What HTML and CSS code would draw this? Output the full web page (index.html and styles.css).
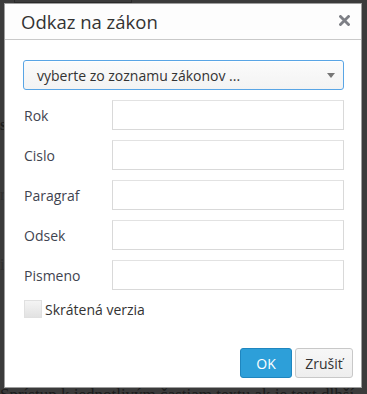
FILE: index.html
```html
<!DOCTYPE html>
<html lang="sk">
<head>
  <meta charset="UTF-8" />
  <title>Odkaz na zákon</title>
  <link rel="stylesheet" href="styles.css">
</head>
<body>
  <div class="page">
    <div class="page-bar"></div>
    <p class="page-line bold">s</p>
    <p class="page-line faint">r</p>
    <p class="page-line faint">i</p>
    <p class="page-line last">Sprístup k jednotlivým častiam textu ak je text dlhší</p>
  </div>

  <div class="dialog">
    <div class="dialog-head">
      <h1>Odkaz na zákon</h1>
      <button class="close-btn" title="Zavrieť">
        <svg width="11" height="11" viewBox="0 0 11 11">
          <path d="M1.5 1.5 L9.5 9.5 M9.5 1.5 L1.5 9.5" stroke="#7d7f85" stroke-width="2.8" stroke-linecap="square"/>
        </svg>
      </button>
    </div>

    <div class="dialog-body">
      <div class="select">
        <span>vyberte zo zoznamu zákonov ...</span>
        <span class="caret"></span>
      </div>

      <div class="row">
        <label>Rok</label>
        <input type="text">
      </div>
      <div class="row">
        <label>Cislo</label>
        <input type="text">
      </div>
      <div class="row">
        <label>Paragraf</label>
        <input type="text">
      </div>
      <div class="row">
        <label>Odsek</label>
        <input type="text">
      </div>
      <div class="row">
        <label>Pismeno</label>
        <input type="text">
      </div>

      <div class="check-row">
        <span class="checkbox"></span>
        <span>Skrátená verzia</span>
      </div>
    </div>

    <div class="dialog-foot">
      <button class="btn btn-primary">OK</button>
      <button class="btn">Zrušiť</button>
    </div>
  </div>
</body>
</html>
```

FILE: styles.css
```css
body {
  margin: 0;
  background: #3b3b3b;
  font-family: 'Open Sans', sans-serif;
  width: 367px;
  height: 394px;
  overflow: hidden;
  position: relative;
}
.page {
  font-family: 'Liberation Serif', serif;
  color: #1c1c1c;
}
.page-bar {
  height: 2px;
  margin-left: 14px;
  width: 116px;
  border: 1px solid #2a2a2a;
  border-top: none;
}
.page-line {
  margin: 0;
  font-size: 16px;
  line-height: 18px;
}
.page-line.bold {
  margin-top: 113px;
  font-weight: bold;
}
.page-line.faint {
  margin-top: 52px;
  color: #2e2e2e;
}
.page-line.last {
  margin-top: 112px;
  font-size: 17px;
}
.dialog {
  position: absolute;
  left: 4px;
  top: 3px;
  width: 358px;
  height: 385px;
  background: #fff;
  border: 1px solid #9e9e9e;
  box-sizing: border-box;
  display: flex;
  flex-direction: column;
}
.dialog-head {
  height: 36px;
  background: #fdfdfd;
  border-bottom: 1px solid #c9c9c9;
  display: flex;
  align-items: center;
  justify-content: space-between;
  padding: 0 11px 0 16px;
  box-sizing: border-box;
}
.dialog-head h1 {
  margin: 0;
  font-size: 18.5px;
  font-weight: normal;
  color: #333;
  line-height: 24px;
}
.close-btn {
  background: none;
  border: none;
  padding: 0;
  width: 12px;
  height: 12px;
  display: flex;
  align-items: center;
  justify-content: center;
  margin-top: -2px;
}
.dialog-body {
  padding: 20px 17px 0 18px;
  display: flex;
  flex-direction: column;
  gap: 10px;
}
.select {
  height: 30px;
  box-sizing: border-box;
  border: 1px solid #59a5e5;
  border-radius: 3px;
  background: linear-gradient(#fbfbfb, #f3f3f3);
  display: flex;
  align-items: center;
  justify-content: space-between;
  padding: 0 8px 0 13px;
  font-size: 14px;
  color: #333;
  box-shadow: inset 0 1px 0 #fff;
}
.caret {
  width: 0;
  height: 0;
  border-left: 4px solid transparent;
  border-right: 4px solid transparent;
  border-top: 5px solid #767676;
  margin-top: 1px;
}
.row {
  display: flex;
  align-items: center;
  height: 30px;
}
.row label {
  width: 88px;
  padding-left: 1px;
  font-size: 14px;
  color: #3f4450;
}
.row input {
  flex: 1;
  height: 30px;
  box-sizing: border-box;
  border: 1px solid #d9d9d9;
  border-top-color: #e2e2e2;
  background: #fff;
  margin: 0;
  padding: 0 6px;
}
.check-row {
  display: flex;
  align-items: center;
  gap: 3px;
  font-size: 14px;
  color: #333;
  height: 18px;
}
.checkbox {
  width: 18px;
  height: 18px;
  box-sizing: border-box;
  margin-left: 1px;
  border: 1px solid #e0e0e0;
  background: linear-gradient(#f4f4f4, #e2e2e2);
}
.dialog-foot {
  margin-top: auto;
  display: flex;
  justify-content: flex-end;
  gap: 3px;
  padding: 0 8px 9px 0;
}
.btn {
  height: 30px;
  box-sizing: border-box;
  border: 1px solid #c8c8c8;
  border-radius: 3px;
  background: linear-gradient(#f7f7f7, #eeeeee);
  font-family: 'Open Sans', sans-serif;
  font-size: 14px;
  color: #333;
  padding: 0 9px;
  width: 58px;
}
.btn-primary {
  width: 52px;
  background: #2d9fd9;
  border-color: #1f86bf;
  color: #fff;
}
```
